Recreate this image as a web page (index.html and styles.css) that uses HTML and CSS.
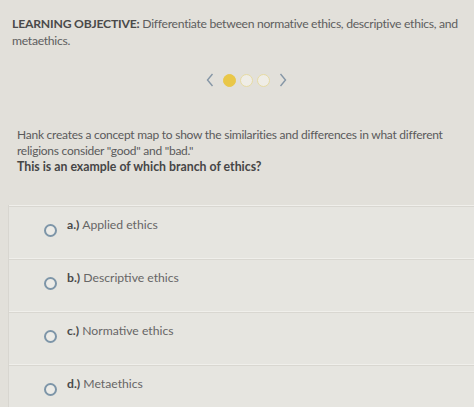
FILE: index.html
```html
<!DOCTYPE html>
<html>
<head>
<meta charset="utf-8">
<link rel="stylesheet" href="styles.css">
</head>
<body>
<div class="page">
  <p class="objective"><b>LEARNING OBJECTIVE:</b> Differentiate between normative ethics, descriptive ethics, and metaethics.</p>
  <div class="carousel">
    <svg class="chev" width="8" height="14" viewBox="0 0 8 14"><path d="M6.5 1 L1.5 7 L6.5 13" fill="none" stroke="#8596a6" stroke-width="1.4"/></svg>
    <span class="dots">
      <span class="dot filled"></span>
      <span class="dot"></span>
      <span class="dot"></span>
    </span>
    <svg class="chev" width="8" height="14" viewBox="0 0 8 14"><path d="M1.5 1 L6.5 7 L1.5 13" fill="none" stroke="#8596a6" stroke-width="1.4"/></svg>
  </div>
  <div class="question">
    <p>Hank creates a concept map to show the similarities and differences in what different religions consider "good" and "bad."</p>
    <p class="ask">This is an example of which branch of ethics?</p>
  </div>
  <div class="answers">
    <div class="row"><span class="radio"></span><span class="label"><b>a.)</b> Applied ethics</span></div>
    <div class="row"><span class="radio"></span><span class="label"><b>b.)</b> Descriptive ethics</span></div>
    <div class="row"><span class="radio"></span><span class="label"><b>c.)</b> Normative ethics</span></div>
    <div class="row"><span class="radio"></span><span class="label"><b>d.)</b> Metaethics</span></div>
  </div>
</div>
</body>
</html>
```
FILE: styles.css
```css
html, body {
  margin: 0;
  padding: 0;
  background: #e2e0da;
}
body {
  font-family: Lato, "Open Sans", sans-serif;
  color: #5a5a5a;
  width: 474px;
  height: 407px;
  overflow: hidden;
}
.page {
  display: flex;
  flex-direction: column;
}
p { margin: 0; }
.objective {
  padding: 15px 4px 0 12px;
  font-size: 12.2px;
  line-height: 17px;
  letter-spacing: -0.3px;
  color: #5e5e5e;
}
.objective b { color: #4a4a4a; font-weight: 700; letter-spacing: -0.2px; }
.carousel {
  margin-top: 23px;
  padding-left: 18px;
  height: 16px;
  display: flex;
  justify-content: center;
  align-items: center;
  gap: 9px;
}
.dots {
  display: flex;
  gap: 4px;
}
.dot {
  width: 11px;
  height: 11px;
  border-radius: 50%;
  border: 1.5px solid #e6dba3;
  background: #efede6;
}
.dot.filled {
  background: #e9c748;
  border-color: #e9c748;
}
.question {
  margin-top: 39px;
  padding-left: 17px;
  padding-right: 6px;
  font-size: 12px;
  line-height: 16px;
  letter-spacing: -0.25px;
  color: #5a5a5a;
}
.question .ask { font-weight: 700; color: #464646; letter-spacing: 0; font-size: 12.3px; }
.answers {
  margin-top: 30px;
  margin-left: 8px;
  border-left: 1px solid #d8d6d0;
  background: #e6e5e0;
}
.row {
  height: 52px;
  border-top: 1px solid #f0efeb;
  box-shadow: inset 0 1px 0 #d9d7d1;
  display: flex;
  align-items: flex-start;
}
.radio {
  margin-top: 18px;
  margin-left: 35px;
  width: 9px;
  height: 9px;
  border-radius: 50%;
  border: 2px solid #7d95a8;
  background: #ecebe7;
  flex: none;
}
.label {
  margin-left: 10px;
  margin-top: 11px;
  font-size: 12.2px;
  color: #666;
}
.label b { color: #4a4a4a; }
```
